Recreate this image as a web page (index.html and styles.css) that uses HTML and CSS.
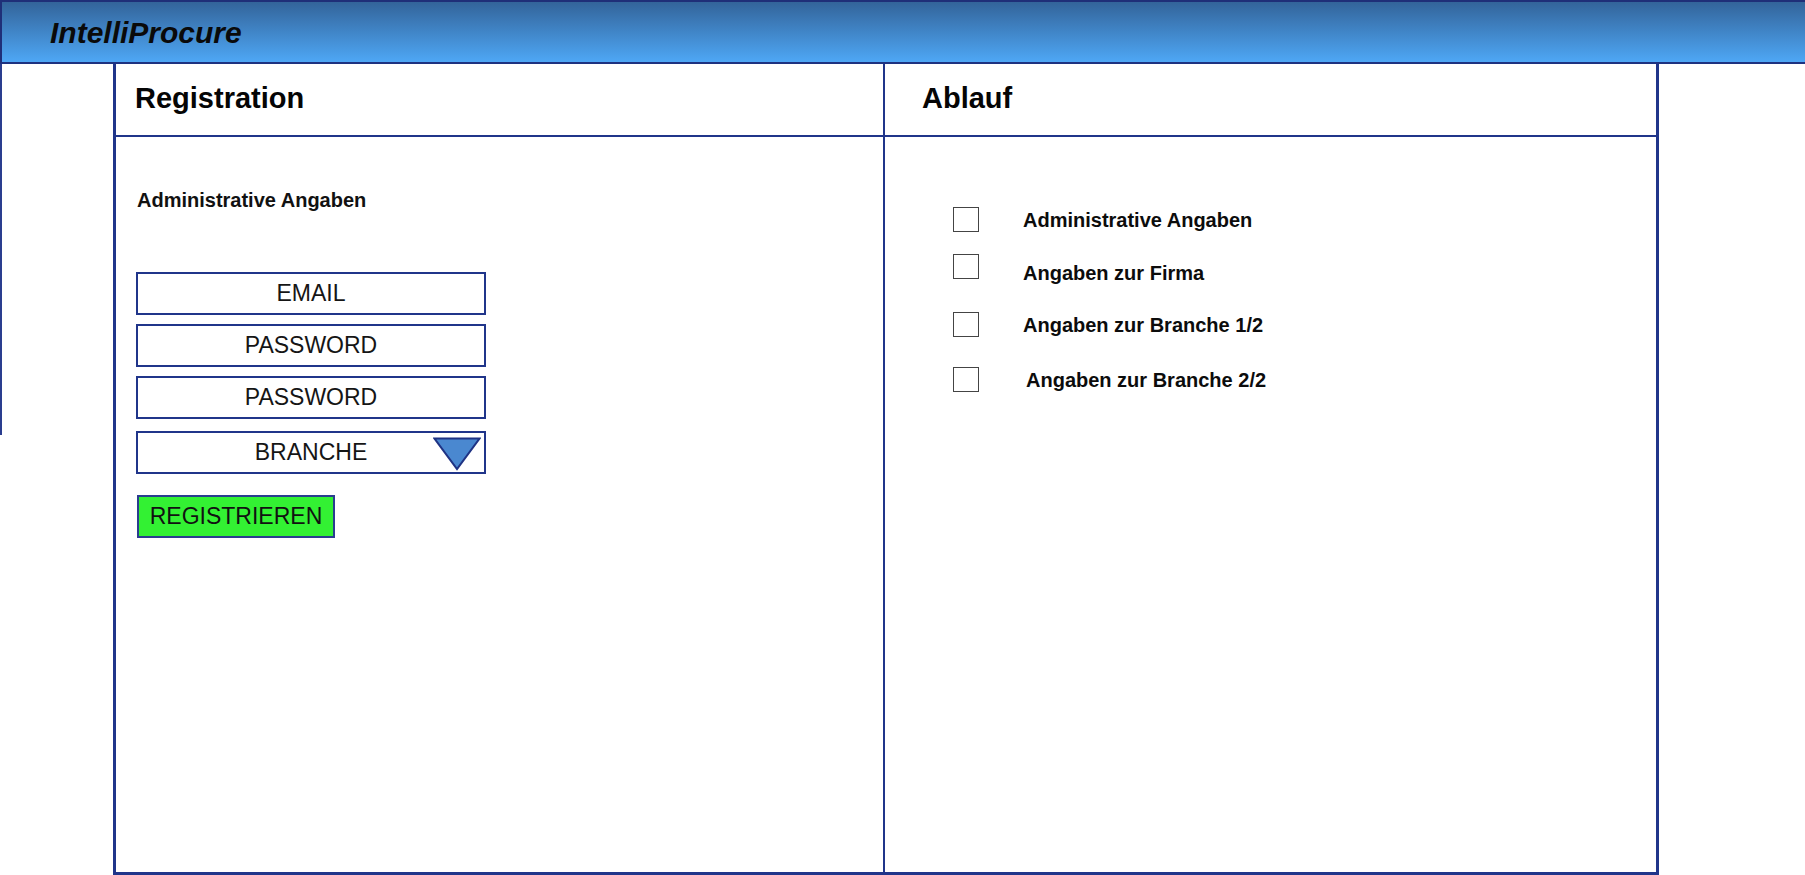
FILE: index.html
```html
<!DOCTYPE html>
<html lang="de">
<head>
<meta charset="utf-8">
<title>IntelliProcure</title>
<link rel="stylesheet" href="styles.css">
</head>
<body>
<header class="topbar">
  <span class="brand">IntelliProcure</span>
</header>
<div class="main">
  <div class="gutter"><div class="gutter-line"></div></div>
  <div class="panel">
    <section class="col col-left">
      <div class="col-head"><h1 class="col-title">Registration</h1></div>
      <div class="col-body form-body">
        <div class="section-label">Administrative Angaben</div>
        <div class="fields">
          <div class="field">EMAIL</div>
          <div class="field">PASSWORD</div>
          <div class="field">PASSWORD</div>
          <div class="field field-select">BRANCHE
            <svg class="select-arrow" width="48" height="34" viewBox="0 0 48 34"><polygon points="1.5,1.5 46.5,1.5 24,32" fill="#4a88d0" stroke="#1f3384" stroke-width="2" stroke-linejoin="miter"/></svg>
          </div>
        </div>
        <div class="submit">REGISTRIEREN</div>
      </div>
    </section>
    <section class="col col-right">
      <div class="col-head head-right"><h1 class="col-title">Ablauf</h1></div>
      <div class="col-body steps">
        <div class="step step-1"><span class="box"></span><span class="step-label">Administrative Angaben</span></div>
        <div class="step step-2"><span class="box"></span><span class="step-label label-low">Angaben zur Firma</span></div>
        <div class="step step-3"><span class="box"></span><span class="step-label">Angaben zur Branche 1/2</span></div>
        <div class="step step-4"><span class="box"></span><span class="step-label label-right">Angaben zur Branche 2/2</span></div>
      </div>
    </section>
  </div>
</div>
</body>
</html>
```
FILE: styles.css
```css
* { box-sizing: border-box; }
html, body { margin: 0; padding: 0; }
body {
  font-family: "Liberation Sans", Arial, sans-serif;
  color: #111;
  background: #fff;
  width: 1805px;
  height: 875px;
  overflow: hidden;
}
.topbar {
  height: 64px;
  border-top: 2px solid #1f2f78;
  border-left: 2px solid #1f2f78;
  border-bottom: 2px solid #1e3280;
  background: linear-gradient(to bottom, #33649a 0%, #4ea7f5 100%);
  display: flex;
  align-items: center;
  padding-left: 48px;
}
.brand {
  font-weight: bold;
  font-style: italic;
  font-size: 30px;
  color: #0a0a0a;
  line-height: 34px;
  padding-top: 1px;
}
.main {
  display: flex;
  height: 811px;
}
.gutter {
  width: 113px;
  flex: 0 0 113px;
}
.gutter-line {
  height: 371px;
  border-left: 2px solid #2a3d8f;
}
.panel {
  width: 1546px;
  height: 811px;
  display: flex;
  border-left: 3px solid #20358a;
  border-right: 3px solid #20358a;
  border-bottom: 3px solid #20358a;
}
.col { display: flex; flex-direction: column; }
.col-left { width: 769px; border-right: 2px solid #20358a; }
.col-right { width: 771px; }
.col-head {
  height: 73px;
  border-bottom: 2px solid #20358a;
  display: flex;
  align-items: center;
  padding-left: 19px;
  padding-bottom: 3px;
}
.head-right { padding-left: 37px; }
.col-title {
  margin: 0;
  font-size: 29px;
  font-weight: bold;
  line-height: 34px;
  color: #050505;
}
.form-body { padding: 51px 0 0 20px; }
.section-label {
  font-size: 20px;
  font-weight: bold;
  line-height: 24px;
  margin-left: 1px;
}
.fields {
  margin-top: 60px;
  display: flex;
  flex-direction: column;
  width: 350px;
}
.field {
  height: 43px;
  border: 2px solid #20358a;
  display: flex;
  align-items: center;
  justify-content: center;
  font-size: 23px;
  color: #151515;
  margin-bottom: 9px;
}
.field:nth-child(3) { margin-bottom: 12px; }
.field-select { position: relative; margin-bottom: 0; }
.select-arrow {
  position: absolute;
  right: 3px;
  top: 4px;
}
.submit {
  margin-top: 21px;
  width: 198px;
  height: 43px;
  border: 2px solid #2a3d8f;
  background: #33f133;
  display: flex;
  align-items: center;
  justify-content: center;
  font-size: 23px;
  color: #111;
  margin-left: 1px;
}
.steps {
  padding: 70px 0 0 68px;
  display: flex;
  flex-direction: column;
}
.step { display: flex; align-items: flex-start; }
.step-2 { margin-top: 21px; }
.step-3 { margin-top: 26px; }
.step-4 { margin-top: 29px; }
.box {
  width: 26px;
  height: 25px;
  border: 1.5px solid #444;
  flex: 0 0 26px;
}
.step-label {
  margin-left: 44px;
  margin-top: 1px;
  font-size: 20px;
  font-weight: bold;
  line-height: 25px;
  color: #0c0c0c;
}
.label-low { margin-top: 7px; }
.label-right { margin-left: 47px; }
```
